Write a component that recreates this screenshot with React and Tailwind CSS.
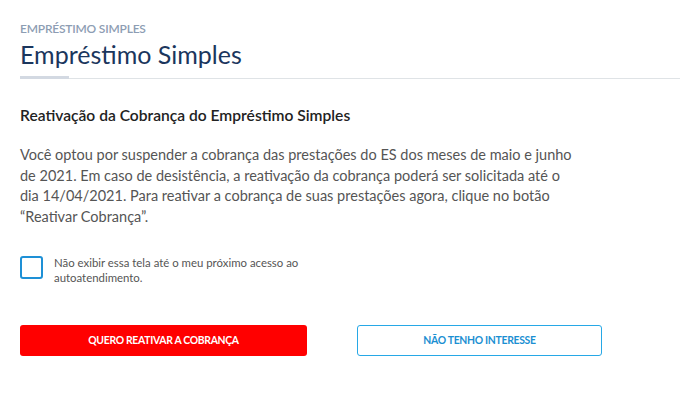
import React from "react";

export default function App() {
  return (
    <div className="w-[680px] h-[415px] bg-white font-['Lato','Liberation_Sans',sans-serif]">
      <div className="pt-[22px]">
        <div className="px-5 text-[12px] leading-[14px] font-semibold text-[#8d9db3] tracking-[-0.2px]">
          EMPRÉSTIMO SIMPLES
        </div>
        <h1 className="px-5 mt-[3px] text-[25px] leading-[30px] text-[#1b365d]">
          Empréstimo Simples
        </h1>
        <div className="mt-[7px] ml-5 relative h-[3px]">
          <div className="absolute left-0 right-0 bottom-0 h-px bg-[#dfe3e6]" />
          <div className="absolute left-0 top-0 h-[3px] w-[49px] bg-[#d3d9e2]" />
        </div>
      </div>

      <div className="px-5 pt-[26px]">
        <h2 className="text-[15.6px] leading-[20px] font-semibold text-[#222]">
          Reativação da Cobrança do Empréstimo Simples
        </h2>
        <p className="mt-[20px] w-[555px] text-[14.5px] leading-[20.5px] text-[#555]">
          Você optou por suspender a cobrança das prestações do ES dos meses de maio e junho
          de 2021. Em caso de desistência, a reativação da cobrança poderá ser solicitada até o
          dia 14/04/2021. Para reativar a cobrança de suas prestações agora, clique no botão
          “Reativar Cobrança”.
        </p>

        <label className="mt-[28px] flex items-start gap-[11px]">
          <span className="mt-[1px] w-[23px] h-[23px] shrink-0 rounded-[3px] border-2 border-[#1e90d6]" />
          <span className="w-[260px] text-[11.4px] leading-[15px] text-[#555]">
            Não exibir essa tela até o meu próximo acesso ao autoatendimento.
          </span>
        </label>

        <div className="mt-[40px] flex gap-[50px]">
          <button className="w-[287px] h-[31px] rounded-[3px] bg-[#ff0000] text-white text-[10.4px] font-bold tracking-[-0.3px]">
            QUERO REATIVAR A COBRANÇA
          </button>
          <button className="w-[245px] h-[31px] rounded-[3px] border border-[#27a8e6] text-[#1b8fd2] text-[10.4px] font-bold tracking-[-0.3px]">
            NÃO TENHO INTERESSE
          </button>
        </div>
      </div>
    </div>
  );
}
